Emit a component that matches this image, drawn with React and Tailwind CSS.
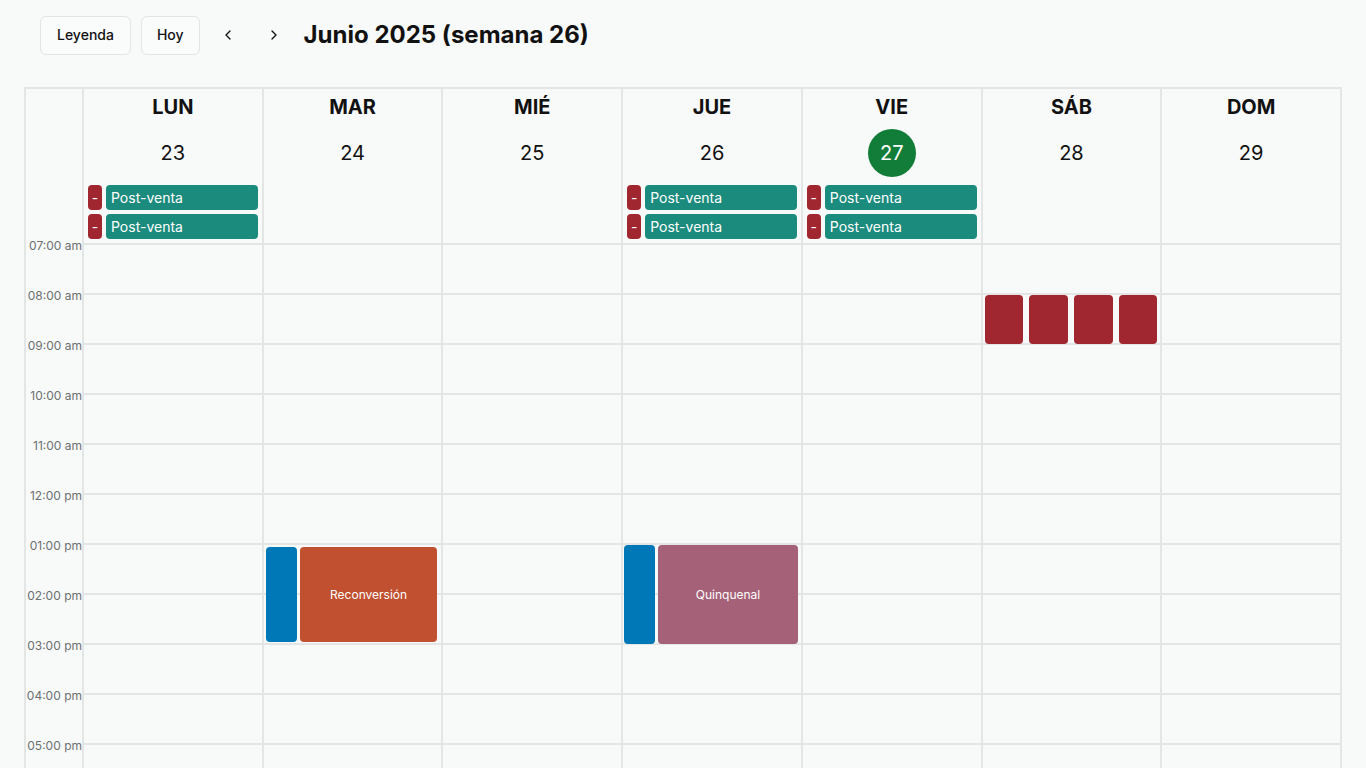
import React from 'react';
import { ChevronLeft, ChevronRight } from 'lucide-react';

const days = [
  { name: 'LUN', date: 23, allDay: 2 },
  { name: 'MAR', date: 24, allDay: 0 },
  { name: 'MIÉ', date: 25, allDay: 0 },
  { name: 'JUE', date: 26, allDay: 2 },
  { name: 'VIE', date: 27, allDay: 2, today: true },
  { name: 'SÁB', date: 28, allDay: 0 },
  { name: 'DOM', date: 29, allDay: 0 }
];

const hours = [
  '07:00 am', '08:00 am', '09:00 am', '10:00 am', '11:00 am', '12:00 pm',
  '01:00 pm', '02:00 pm', '03:00 pm', '04:00 pm', '05:00 pm'
];

const AllDayEvent = () => (
  <div className="flex gap-1 h-[25px]">
    <div className="w-[14px] rounded bg-[#a0262f] text-white text-sm flex items-center justify-center">-</div>
    <div className="flex-1 rounded bg-[#1b8b7d] text-white text-sm flex items-center pl-[5px]">Post-venta</div>
  </div>
);

const TimedEvents = ({ index }) => {
  if (index === 1) {
    return (
      <>
        <div className="absolute top-[304px] left-[2px] w-[31px] h-[95px] rounded bg-[#0077b6]" />
        <div className="absolute top-[304px] left-[36px] right-[4px] h-[95px] rounded bg-[#c0502f] text-white text-xs flex items-center justify-center">
          Reconversión
        </div>
      </>
    );
  }
  if (index === 3) {
    return (
      <>
        <div className="absolute top-[302px] left-[1px] w-[31px] h-[99px] rounded bg-[#0077b6]" />
        <div className="absolute top-[302px] left-[35px] right-[3px] h-[99px] rounded bg-[#a56177] text-white text-xs flex items-center justify-center">
          Quinquenal
        </div>
      </>
    );
  }
  if (index === 5) {
    return (
      <div className="absolute top-[52px] left-[2px] right-[3px] h-[49px] flex gap-[6px]">
        <div className="flex-1 rounded bg-[#a0262f]" />
        <div className="flex-1 rounded bg-[#a0262f]" />
        <div className="flex-1 rounded bg-[#a0262f]" />
        <div className="flex-1 rounded bg-[#a0262f]" />
      </div>
    );
  }
  return null;
};

export default function App() {
  return (
    <div className="h-screen overflow-hidden bg-[#f8f9f9] font-['Inter',sans-serif] text-[#111]">
      <div className="flex items-center gap-[10px] pl-10 pt-[15px] h-[55px]">
        <button type="button" className="h-[39px] px-4 rounded-md border border-[#e3e4e4] bg-[#fafbfb] text-sm font-medium">
          Leyenda
        </button>
        <button type="button" className="h-[39px] px-[15px] rounded-md border border-[#e3e4e4] bg-[#fafbfb] text-sm font-medium">
          Hoy
        </button>
        <button type="button" className="h-[39px] w-[36px] flex items-center justify-center" aria-label="Anterior">
          <ChevronLeft size={16} strokeWidth={2} />
        </button>
        <button type="button" className="h-[39px] w-[36px] flex items-center justify-center" aria-label="Siguiente">
          <ChevronRight size={16} strokeWidth={2} />
        </button>
        <h1 className="ml-[2px] text-2xl font-bold">Junio 2025 (semana 26)</h1>
      </div>

      <div className="mx-6 mt-8 border-t-2 border-x-2 border-[#e4e6e6] grid grid-cols-[56px_repeat(7,1fr)]">
        <div>
          <div className="h-[154px]" />
          {hours.map((h) => (
            <div key={h} className="h-[50px] flex flex-col">
              <div className="-mt-[5px] text-right text-xs leading-4 text-[#6b7070]">{h}</div>
            </div>
          ))}
        </div>

        {days.map((d, i) => (
          <div key={d.name} className="border-l-2 border-[#e4e6e6]">
            <div className="h-[154px] pt-1 px-1 flex flex-col">
              <div className="h-7 text-xl font-bold text-center leading-7">{d.name}</div>
              <div className="mt-2 h-12 flex items-center justify-center">
                {d.today ? (
                  <div className="w-12 h-12 rounded-full bg-[#127d38] text-white text-xl flex items-center justify-center">
                    {d.date}
                  </div>
                ) : (
                  <span className="text-xl">{d.date}</span>
                )}
              </div>
              {d.allDay > 0 && (
                <div className="mt-2 flex flex-col gap-1">
                  <AllDayEvent />
                  <AllDayEvent />
                </div>
              )}
            </div>
            <div className="relative">
              {hours.map((h) => (
                <div key={h} className="h-[50px] border-t-2 border-[#e4e6e6]" />
              ))}
              <TimedEvents index={i} />
            </div>
          </div>
        ))}
      </div>
    </div>
  );
}
